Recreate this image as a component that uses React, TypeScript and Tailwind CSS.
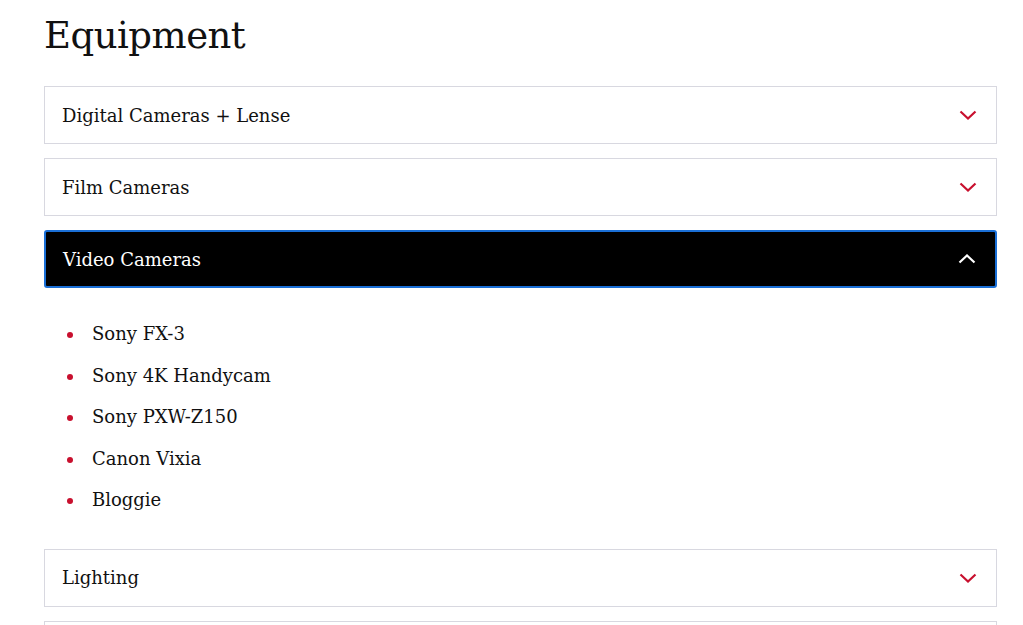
import { useState } from 'react';

const SECTIONS: { title: string; items: string[] }[] = [
  { title: 'Digital Cameras + Lense', items: [] },
  { title: 'Film Cameras', items: [] },
  {
    title: 'Video Cameras',
    items: ['Sony FX-3', 'Sony 4K Handycam', 'Sony PXW-Z150', 'Canon Vixia', 'Bloggie'],
  },
  { title: 'Lighting', items: [] },
  { title: 'Audio', items: [] },
];

function Chevron({ up }: { up: boolean }) {
  return (
    <svg width="18" height="10" viewBox="0 0 18 10" fill="none" className={up ? 'text-white' : 'text-[#c8102e]'}>
      {up ? (
        <path d="M1.5 8.5L9 1.5L16.5 8.5" stroke="currentColor" strokeWidth="2.2" />
      ) : (
        <path d="M1.5 1.5L9 8.5L16.5 1.5" stroke="currentColor" strokeWidth="2.2" />
      )}
    </svg>
  );
}

export default function App() {
  const [open, setOpen] = useState<number>(2);

  return (
    <div className="h-screen overflow-hidden bg-white px-11 pt-[8px] font-['DejaVu_Serif',serif] text-[#111]">
      <h1 className="m-0 text-[37px] leading-[56px] font-normal tracking-[-0.5px]">Equipment</h1>

      <div className="mt-[22px] flex flex-col gap-[14px] w-[953px]">
        {SECTIONS.map((s, i) => {
          const isOpen = open === i;
          return (
            <div key={s.title}>
              <button
                onClick={() => setOpen(isOpen ? -1 : i)}
                className={`w-full h-[58px] flex items-center justify-between pl-[17px] pr-[19px] text-left text-[18px] cursor-pointer ${
                  isOpen
                    ? 'bg-black text-white border-2 border-[#1a6fd6] rounded-[3px]'
                    : 'bg-white text-[#111] border border-[#d8d8e0]'
                }`}
              >
                <span>{s.title}</span>
                <Chevron up={isOpen} />
              </button>
              {isOpen && (
                <ul className="m-0 pt-[25px] pb-[14px] pl-[48px] list-none">
                  {s.items.map((it) => (
                    <li key={it} className="relative h-[41.5px] text-[18px] leading-[41.5px]">
                      <span className="absolute -left-[25px] top-[19px] w-[6px] h-[6px] rounded-full bg-[#c8102e]" />
                      {it}
                    </li>
                  ))}
                </ul>
              )}
            </div>
          );
        })}
      </div>
    </div>
  );
}
